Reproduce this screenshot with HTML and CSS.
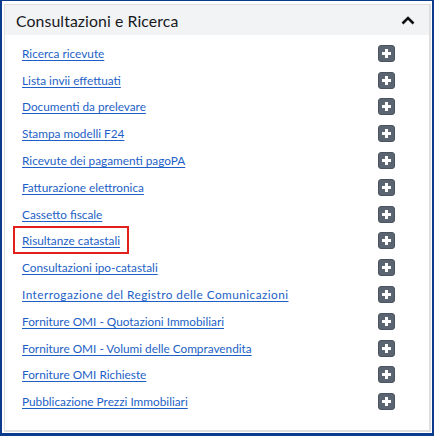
FILE: index.html
```html
<!DOCTYPE html>
<html lang="it">
<head>
<meta charset="utf-8">
<link rel="stylesheet" href="styles.css">
</head>
<body>
<div class="frame">
  <div class="card">
    <div class="header">
      <span class="title">Consultazioni e Ricerca</span>
      <svg class="chev" width="14" height="9" viewBox="0 0 14 9"><path d="M1.5 7.5 L7 2 L12.5 7.5" fill="none" stroke="#111" stroke-width="2.6"/></svg>
    </div>
    <ul class="list">
      <li class="row"><a href="#">Ricerca ricevute</a><span class="plus"></span></li>
      <li class="row"><a href="#">Lista invii effettuati</a><span class="plus"></span></li>
      <li class="row"><a href="#">Documenti da prelevare</a><span class="plus"></span></li>
      <li class="row"><a href="#">Stampa modelli F24</a><span class="plus"></span></li>
      <li class="row"><a href="#">Ricevute dei pagamenti pagoPA</a><span class="plus"></span></li>
      <li class="row"><a href="#">Fatturazione elettronica</a><span class="plus"></span></li>
      <li class="row"><a href="#">Cassetto fiscale</a><span class="plus"></span></li>
      <li class="row"><a href="#" class="hl">Risultanze catastali</a><span class="plus"></span></li>
      <li class="row"><a href="#">Consultazioni ipo-catastali</a><span class="plus"></span></li>
      <li class="row"><a href="#" class="wide">Interrogazione del Registro delle Comunicazioni</a><span class="plus"></span></li>
      <li class="row"><a href="#">Forniture OMI - Quotazioni Immobiliari</a><span class="plus"></span></li>
      <li class="row"><a href="#">Forniture OMI - Volumi delle Compravendita</a><span class="plus"></span></li>
      <li class="row"><a href="#">Forniture OMI Richieste</a><span class="plus"></span></li>
      <li class="row"><a href="#">Pubblicazione Prezzi Immobiliari</a><span class="plus"></span></li>
    </ul>
  </div>
</div>
</body>
</html>
```
FILE: styles.css
```css
html, body { margin: 0; padding: 0; background: #fff; }
.frame {
  width: 434px; height: 436px; box-sizing: border-box;
  border-style: solid; border-color: #0b3b8c;
  border-width: 1px 2px 3px 2px;
  padding: 3px 1px 1px 2px;
}
.card {
  height: 100%; box-sizing: border-box;
  border: 1px solid #dedede;
  border-right-width: 2px; border-bottom-width: 2px;
}
.header {
  height: 30px; background: #f2f3f5;
  display: flex; align-items: center; justify-content: space-between;
  padding: 0 14px 0 11px;
}
.title {
  font-family: Lato, sans-serif; font-size: 15.8px; color: #17191c;
  letter-spacing: 0.1px;
}
.chev { display: block; }
.list { list-style: none; margin: 0; padding: 5px 34px 0 17px; }
.row {
  height: 26.8px; display: flex; align-items: center; justify-content: space-between;
}
.row a {
  font-family: Lato, sans-serif; font-size: 11.8px; color: #1d5fc6;
  text-decoration: underline; text-underline-offset: 2px;
  position: relative;
}
.row a.wide { letter-spacing: 0.45px; }
.row a.hl::after {
  content: ""; position: absolute;
  left: -9px; right: -9px; top: -7px; bottom: -6px;
  border: 2px solid #e3211c;
}
.plus {
  width: 17px; height: 17px; border-radius: 3px; background: #5b6571;
  position: relative; box-sizing: border-box; border: 1px solid #4a535e;
}
.plus::before, .plus::after {
  content: ""; position: absolute; background: #fff;
}
.plus::before { left: 3px; right: 3px; top: 6px; height: 3px; }
.plus::after { top: 3px; bottom: 3px; left: 6px; width: 3px; }
```
